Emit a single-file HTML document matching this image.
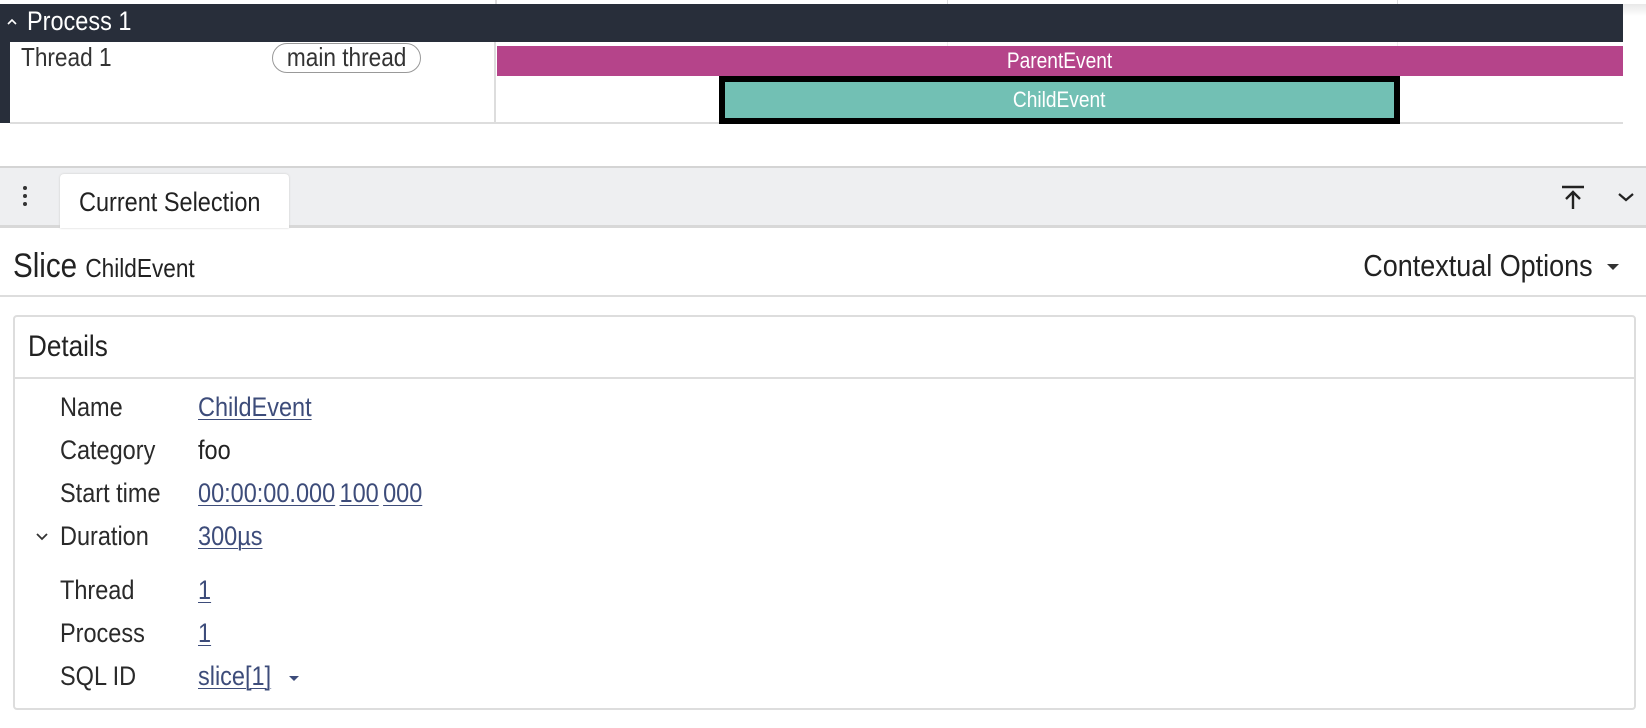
<!DOCTYPE html>
<html><head><meta charset="utf-8"><style>
*{box-sizing:border-box;margin:0;padding:0}
body{width:1646px;height:728px;background:#fff;position:relative;overflow:hidden;font-family:"Liberation Sans",sans-serif;color:#222}
.a{position:absolute}
.n{display:inline-block;transform:scaleX(.87);transform-origin:left center;white-space:nowrap}
.lbl{position:absolute;left:60px;font-size:27px;color:#2a2a2a}
.val{position:absolute;left:198px;font-size:27px;color:#222}
.link{color:#3d4c7a;text-decoration:underline;text-decoration-thickness:1px;text-underline-offset:3px}
</style></head><body>
<div class="a" style="left:495px;top:0;width:2px;height:4px;background:#ddd"></div>
<div class="a" style="left:947px;top:0;width:1px;height:4px;background:#ddd"></div>
<div class="a" style="left:1397px;top:0;width:1px;height:4px;background:#ddd"></div>
<div class="a" style="left:0;top:4px;width:1623px;height:38px;background:#282e3a"></div>
<div class="a" style="left:1623px;top:4px;width:23px;height:12px;background:linear-gradient(#e8e8e8,#fff)"></div>
<svg class="a" style="left:6px;top:17px" width="12" height="10"><path d="M2 7 L6 3 L10 7" stroke="#fff" stroke-width="1.6" fill="none"/></svg>
<div class="a" style="left:27px;top:5px;font-size:27px;color:#fff;line-height:32px"><span class="n">Process 1</span></div>
<div class="a" style="left:0;top:42px;width:10px;height:81px;background:#282e3a"></div>
<div class="a" style="left:21px;top:42px;font-size:26px;line-height:30px;color:#333"><span class="n">Thread 1</span></div>
<div class="a" style="left:272px;top:43px;width:149px;height:30px;border:1.5px solid #999;border-radius:15px;font-size:26px;line-height:26px;color:#333;text-align:center"><span class="n" style="transform-origin:center">main thread</span></div>
<div class="a" style="left:494px;top:42px;width:2px;height:81px;background:#ddd"></div>
<div class="a" style="left:947px;top:42px;width:1px;height:81px;background:#eee"></div>
<div class="a" style="left:1397px;top:42px;width:1px;height:81px;background:#eee"></div>
<div class="a" style="left:10px;top:122px;width:1613px;height:2px;background:#ddd"></div>
<div class="a" style="left:497px;top:46px;width:1126px;height:30px;background:#b5448a;color:#fff;font-size:22px;line-height:30px;text-align:center"><span class="n" style="transform-origin:center">ParentEvent</span></div>
<div class="a" style="left:719px;top:76px;width:681px;height:48px;border:6px solid #000;background:#72c0b4;color:#fff;font-size:22px;line-height:36px;text-align:center"><span class="n" style="transform-origin:center">ChildEvent</span></div>
<div class="a" style="left:0;top:166px;width:1646px;height:62px;background:#eeeff1;border-top:2px solid #d4d4d4;border-bottom:3px solid #d8d8d8"></div>
<div class="a" style="left:23px;top:186px;width:4px;height:4px;border-radius:2px;background:#333;box-shadow:0 8px 0 #333,0 16px 0 #333"></div>
<div class="a" style="left:60px;top:174px;width:229px;height:54px;background:#fff;border-radius:4px 4px 0 0;box-shadow:0 0 2px #ccc"></div>
<div class="a" style="left:79px;top:184px;font-size:27px;line-height:36px;color:#222"><span class="n">Current Selection</span></div>
<svg class="a" style="left:1560px;top:184px" width="26" height="28"><path d="M2 3 H24 M13 25 V8 M6 15 L13 8 L20 15" stroke="#222" stroke-width="2.4" fill="none"/></svg>
<svg class="a" style="left:1616px;top:190px" width="20" height="14"><path d="M3 4 L10 10 L17 4" stroke="#222" stroke-width="2.2" fill="none"/></svg>
<div class="a" style="left:13px;top:246px;font-size:34px;line-height:40px;color:#222"><span class="n">Slice <span style="font-size:26px">ChildEvent</span></span></div>
<div class="a" style="left:1300px;top:246px;width:293px;font-size:31px;line-height:40px;color:#222;text-align:right"><span class="n" style="transform-origin:right center">Contextual Options</span></div>
<svg class="a" style="left:1605px;top:262px" width="16" height="10"><path d="M2 2 H14 L8 8 Z" fill="#333"/></svg>
<div class="a" style="left:0;top:295px;width:1646px;height:2px;background:#ddd"></div>
<div class="a" style="left:13px;top:315px;width:1623px;height:395px;border:2px solid #ddd;border-radius:4px"></div>
<div class="a" style="left:15px;top:377px;width:1619px;height:2px;background:#ddd"></div>
<div class="a" style="left:28px;top:329px;font-size:30px;line-height:36px;color:#222"><span class="n">Details</span></div>
<div class="lbl" style="top:392px"><span class="n">Name</span></div><div class="val" style="top:392px"><span class="n link">ChildEvent</span></div>
<div class="lbl" style="top:435px"><span class="n">Category</span></div><div class="val" style="top:435px"><span class="n">foo</span></div>
<div class="lbl" style="top:478px"><span class="n">Start time</span></div><div class="val" style="top:478px"><span class="n"><span class="link">00:00:00.000</span><span class="link" style="margin-left:5px">100</span><span class="link" style="margin-left:5px">000</span></span></div>
<svg class="a" style="left:35px;top:532px" width="14" height="10"><path d="M2 2 L7 7 L12 2" stroke="#333" stroke-width="1.8" fill="none"/></svg>
<div class="lbl" style="top:521px"><span class="n">Duration</span></div><div class="val" style="top:521px"><span class="n link">300µs</span></div>
<div class="lbl" style="top:575px"><span class="n">Thread</span></div><div class="val" style="top:575px"><span class="n link">1</span></div>
<div class="lbl" style="top:618px"><span class="n">Process</span></div><div class="val" style="top:618px"><span class="n link">1</span></div>
<div class="lbl" style="top:661px"><span class="n">SQL ID</span></div><div class="val" style="top:661px"><span class="n link">slice[1]</span></div>
<svg class="a" style="left:288px;top:675px" width="12" height="8"><path d="M1 1 H11 L6 6 Z" fill="#3d4c7a"/></svg>
</body></html>
